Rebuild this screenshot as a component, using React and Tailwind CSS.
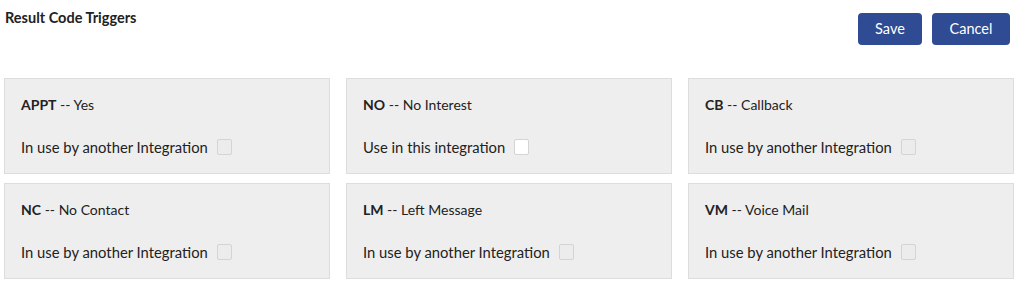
import React from "react";

const triggers = [
  { code: "APPT", label: "Yes", text: "In use by another Integration", disabled: true },
  { code: "NO", label: "No Interest", text: "Use in this integration", disabled: false },
  { code: "CB", label: "Callback", text: "In use by another Integration", disabled: true },
  { code: "NC", label: "No Contact", text: "In use by another Integration", disabled: true },
  { code: "LM", label: "Left Message", text: "In use by another Integration", disabled: true },
  { code: "VM", label: "Voice Mail", text: "In use by another Integration", disabled: true },
];

function TriggerCard({ code, label, text, disabled }) {
  return (
    <div className="h-[96px] bg-[#eeeeee] border border-[#dddddd] pl-4 pt-[16px]">
      <div className="text-[14px] leading-[20px] text-[#222]">
        <span className="font-bold">{code}</span> -- {label}
      </div>
      <div className="mt-[22px] flex items-center text-[14.8px] leading-[20px] text-[#222]">
        <span>{text}</span>
        <span
          className={
            disabled
              ? "ml-[9px] w-[15px] h-[16px] rounded-[2px] border border-[#d4d4d4] bg-[#ececec]"
              : "ml-[9px] w-[15px] h-[16px] rounded-[2px] border border-[#d4d4d4] bg-white"
          }
        />
      </div>
    </div>
  );
}

export default function App() {
  return (
    <div className="w-[1022px] h-[286px] bg-white font-['Lato','Liberation_Sans',sans-serif]">
      <div className="flex justify-between pl-[5px] pr-[12px] pt-[9px]">
        <h2 className="text-[14.5px] leading-[18px] font-bold text-[#222]">Result Code Triggers</h2>
        <div className="flex gap-[10px] pt-[4px]">
          <button className="w-[64px] h-[32px] rounded-[4px] bg-[#2e4b93] text-white text-[14.5px]">Save</button>
          <button className="w-[78px] h-[32px] rounded-[4px] bg-[#2e4b93] text-white text-[14.5px]">Cancel</button>
        </div>
      </div>
      <div className="grid grid-cols-3 gap-x-[16px] gap-y-[9px] pl-[4px] pr-[8px] mt-[33px]">
        {triggers.map((t) => (
          <TriggerCard key={t.code} {...t} />
        ))}
      </div>
    </div>
  );
}
